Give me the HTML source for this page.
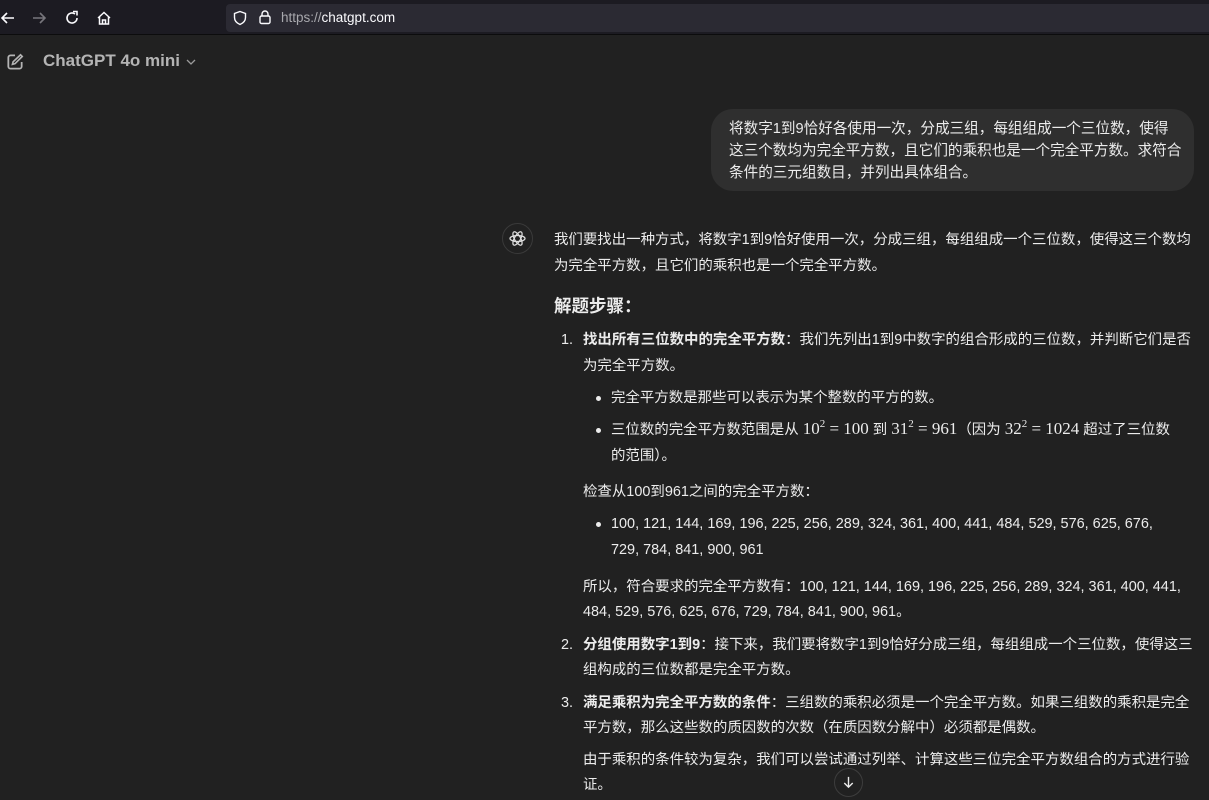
<!DOCTYPE html>
<html><head><meta charset="utf-8"><style>
*{margin:0;padding:0;box-sizing:border-box}
body{width:1209px;height:800px;background:#212121;overflow:hidden;position:relative;font-family:"Liberation Sans","Noto Sans CJK SC",sans-serif;color:#ececec}
.bar{position:absolute;left:0;top:0;width:1209px;height:35px;background:#1c1b22;border-bottom:1px solid #0c0c0d}
.url{position:absolute;left:226px;top:4px;width:983px;height:28px;background:#2b2a33;border-radius:4px 0 0 4px}
.url span{position:absolute;left:55px;top:6px;font-size:13.5px;color:#fbfbfe}
.url span i{font-style:normal;color:#a8a8ad}
.l{position:absolute;white-space:nowrap;font-size:14.45px;line-height:26px;height:26px}
b{font-weight:bold}
.m{font-family:"Liberation Serif","DejaVu Serif",serif;font-size:17px;line-height:1}
sup{font-size:11px;vertical-align:7px;line-height:0;font-family:"Liberation Serif",serif}
.dot{position:absolute;width:5px;height:5px;border-radius:50%;background:#ececec}
.num{position:absolute;font-size:14.45px;line-height:26px}
</style></head><body>
<div class="bar">
<svg style="position:absolute;left:0;top:10px" width="16" height="16" viewBox="0 0 16 16"><path d="M14 8H2M7 3L2 8l5 5" stroke="#fbfbfe" stroke-width="1.6" fill="none"/></svg>
<svg style="position:absolute;left:31px;top:10px" width="16" height="16" viewBox="0 0 16 16"><path d="M2 8h12M9 3l5 5-5 5" stroke="#77767c" stroke-width="1.6" fill="none"/></svg>
<svg style="position:absolute;left:64px;top:10px" width="16" height="16" viewBox="0 0 16 16"><path d="M13 8a5 5 0 1 1-2-4" stroke="#fbfbfe" stroke-width="1.6" fill="none"/><path d="M9 1.5h4v4" stroke="#fbfbfe" stroke-width="1.6" fill="none"/></svg>
<svg style="position:absolute;left:96px;top:10px" width="16" height="16" viewBox="0 0 16 16"><path d="M2 8L8 2.5 14 8M3.5 6.5V14h9V6.5M6.5 14v-4h3v4" stroke="#fbfbfe" stroke-width="1.5" fill="none"/></svg>
<div class="url">
<svg style="position:absolute;left:6px;top:6px" width="16" height="16" viewBox="0 0 16 16"><path d="M8 1.5l5.5 2v4c0 3.5-2.5 5.7-5.5 7-3-1.3-5.5-3.5-5.5-7v-4z" stroke="#fbfbfe" stroke-width="1.4" fill="none"/></svg>
<svg style="position:absolute;left:31px;top:5px" width="16" height="16" viewBox="0 0 16 16"><rect x="3" y="7" width="10" height="7.5" rx="1.5" stroke="#fbfbfe" stroke-width="1.4" fill="none"/><path d="M5 7V5a3 3 0 0 1 6 0v2" stroke="#fbfbfe" stroke-width="1.4" fill="none"/></svg>
<span><i>https://</i>chatgpt.com</span></div>
</div>
<svg style="position:absolute;left:5px;top:52px" width="20" height="20" viewBox="0 0 18 18"><path d="M9 3H5a2 2 0 0 0-2 2v8a2 2 0 0 0 2 2h8a2 2 0 0 0 2-2V9" stroke="#b4b4b4" stroke-width="1.6" fill="none"/><path d="M14 2.5l1.5 1.5-6.5 6.5-2.3.6.6-2.3z" stroke="#b4b4b4" stroke-width="1.5" fill="none"/></svg>
<div style="position:absolute;left:43px;top:51px;font-size:17px;font-weight:bold;color:#b4b4b4">ChatGPT 4o mini</div>
<svg style="position:absolute;left:186px;top:58px" width="10" height="8" viewBox="0 0 10 8"><path d="M1 2l4 4 4-4" stroke="#9b9b9b" stroke-width="1.3" fill="none"/></svg>

<div style="position:absolute;left:711px;top:109px;width:483px;height:82px;background:#2f2f2f;border-radius:22px"></div>
<div class="l" style="left:729px;top:118px;line-height:22px;height:auto;font-size:14.6px">将数字1到9恰好各使用一次，分成三组，每组组成一个三位数，使得<br>这三个数均为完全平方数，且它们的乘积也是一个完全平方数。求符合<br>条件的三元组数目，并列出具体组合。</div>

<div style="position:absolute;left:502px;top:223px;width:31px;height:31px;border-radius:50%;border:1px solid #3a3a3a"></div>
<svg style="position:absolute;left:508px;top:229px" width="19" height="19" viewBox="0 0 24 24"><g fill="none" stroke="#dcdcdc" stroke-width="1.6"><ellipse cx="12" cy="12" rx="9.5" ry="3.8"/><ellipse cx="12" cy="12" rx="9.5" ry="3.8" transform="rotate(60 12 12)"/><ellipse cx="12" cy="12" rx="9.5" ry="3.8" transform="rotate(120 12 12)"/></g></svg>

<div class="l" style="left:554px;top:227px">我们要找出一种方式，将数字1到9恰好使用一次，分成三组，每组组成一个三位数，使得这三个数均</div>
<div class="l" style="left:554px;top:253px">为完全平方数，且它们的乘积也是一个完全平方数。</div>
<div class="l" style="left:554px;top:293px;font-size:17.5px;font-weight:bold">解题步骤：</div>
<div class="num" style="left:561px;top:327px">1.</div>
<div class="l" style="left:583px;top:327px"><b>找出所有三位数中的完全平方数</b>：我们先列出1到9中数字的组合形成的三位数，并判断它们是否</div>
<div class="l" style="left:583px;top:353px">为完全平方数。</div>
<div class="dot" style="left:596px;top:396px"></div>
<div class="l" style="left:611px;top:385px">完全平方数是那些可以表示为某个整数的平方的数。</div>
<div class="dot" style="left:596px;top:428px"></div>
<div class="l" style="left:611px;top:417px">三位数的完全平方数范围是从 <span class="m">10<sup>2</sup> = 100</span> 到 <span class="m">31<sup>2</sup> = 961</span>（因为 <span class="m">32<sup>2</sup> = 1024</span> 超过了三位数</div>
<div class="l" style="left:611px;top:443px">的范围）。</div>
<div class="l" style="left:583px;top:479px">检查从100到961之间的完全平方数：</div>
<div class="dot" style="left:596px;top:522px"></div>
<div class="l" style="left:611px;top:511px">100, 121, 144, 169, 196, 225, 256, 289, 324, 361, 400, 441, 484, 529, 576, 625, 676,</div>
<div class="l" style="left:611px;top:537px">729, 784, 841, 900, 961</div>
<div class="l" style="left:583px;top:574px">所以，符合要求的完全平方数有：100, 121, 144, 169, 196, 225, 256, 289, 324, 361, 400, 441,</div>
<div class="l" style="left:583px;top:599px">484, 529, 576, 625, 676, 729, 784, 841, 900, 961。</div>
<div class="num" style="left:561px;top:632px">2.</div>
<div class="l" style="left:583px;top:632px"><b>分组使用数字1到9</b>：接下来，我们要将数字1到9恰好分成三组，每组组成一个三位数，使得这三</div>
<div class="l" style="left:583px;top:657px">组构成的三位数都是完全平方数。</div>
<div class="num" style="left:561px;top:690px">3.</div>
<div class="l" style="left:583px;top:690px"><b>满足乘积为完全平方数的条件</b>：三组数的乘积必须是一个完全平方数。如果三组数的乘积是完全</div>
<div class="l" style="left:583px;top:715px">平方数，那么这些数的质因数的次数（在质因数分解中）必须都是偶数。</div>
<div class="l" style="left:583px;top:747px">由于乘积的条件较为复杂，我们可以尝试通过列举、计算这些三位完全平方数组合的方式进行验</div>
<div class="l" style="left:583px;top:772px">证。</div>
<div style="position:absolute;left:834px;top:768px;width:29px;height:29px;border-radius:50%;border:1px solid #3d3d3d;background:#212121"></div>
<svg style="position:absolute;left:841px;top:775px" width="15" height="15" viewBox="0 0 16 16"><path d="M8 2v11M3.5 8.5L8 13l4.5-4.5" stroke="#ececec" stroke-width="1.5" fill="none"/></svg>
</body></html>
